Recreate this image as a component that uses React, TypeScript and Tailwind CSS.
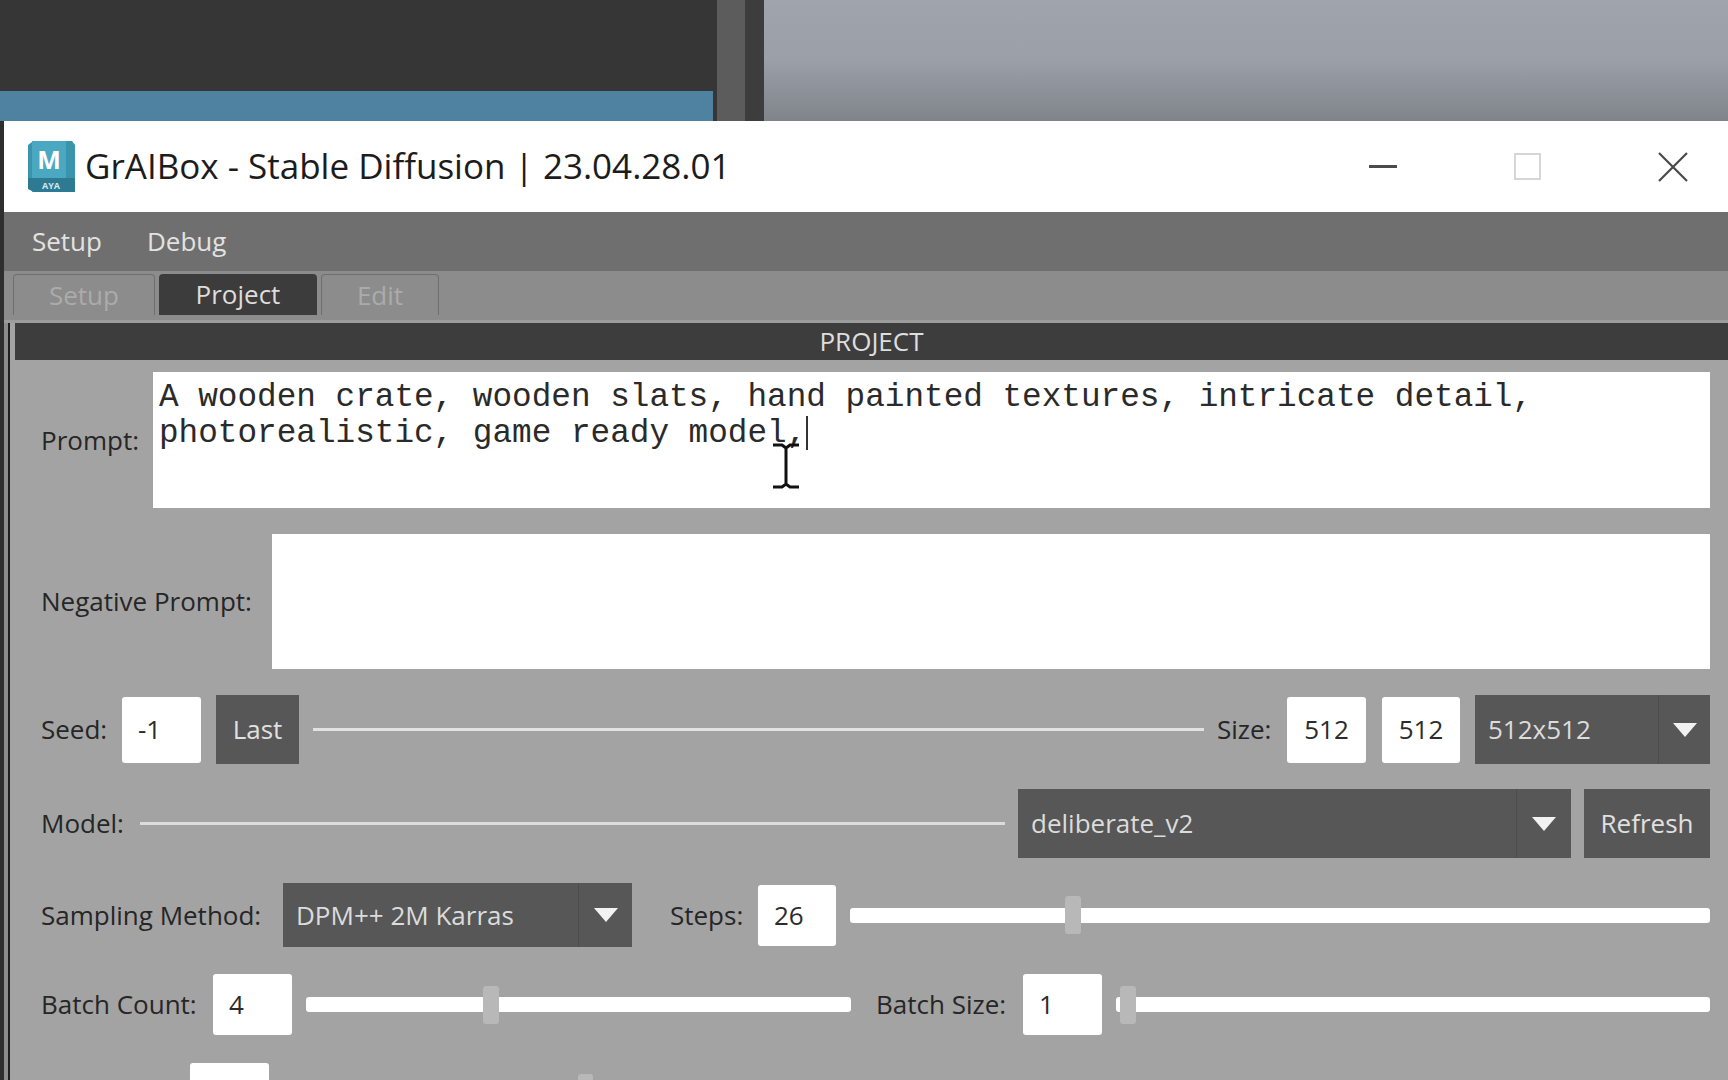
import React from 'react';

const sans = 'font-["Open_Sans","Noto_Sans",sans-serif]';

const ValueBox: React.FC<{ value: string; className: string }> = ({ value, className }) => (
  <div className={`flex items-center shrink-0 bg-white rounded-[3px] text-[26px] text-[#2c2c2c] ${className}`}>{value}</div>
);

const Combo: React.FC<{ value: string; className: string; arrowWidth: string }> = ({ value, className, arrowWidth }) => (
  <div className={`flex shrink-0 bg-[#575757] text-[26px] text-[#dcdcdc] ${className}`}>
    <div className="flex-1 flex items-center pl-[13px] whitespace-nowrap">{value}</div>
    <div className={`flex items-center justify-center border-l border-[#4d4d4d] ${arrowWidth}`}>
      <svg width="24" height="14" viewBox="0 0 24 14"><path d="M0 0h24L12 14z" fill="#f2f2f2" /></svg>
    </div>
  </div>
);

const Slider: React.FC<{ className: string; thumb: string }> = ({ className, thumb }) => (
  <div className={`relative h-[38px] flex items-center ${className}`}>
    <div className="w-full h-[15px] bg-white rounded-[3px]" />
    <div className={`absolute top-0 w-[16px] h-[38px] bg-[#b8b8b8] rounded-[3px] ${thumb}`} />
  </div>
);

const Label: React.FC<{ text: string; className: string }> = ({ text, className }) => (
  <div className={`shrink-0 text-[26px] text-[#262626] whitespace-nowrap ${className}`}>{text}</div>
);

export default function App() {
  return (
    <div className={`h-screen w-full overflow-hidden flex flex-col bg-[#333333] ${sans}`}>
      {/* stuff behind the window */}
      <div className="flex h-[121px] shrink-0">
        <div className="w-[717px] flex flex-col bg-[#363636]">
          <div className="h-[91px]" />
          <div className="h-[30px] w-[713px] bg-[#4f81a1]" />
        </div>
        <div className="w-[28px] bg-[#5c5c5c]" />
        <div className="w-[19px] bg-[#3d3d3d]" />
        <div className="flex-1 bg-gradient-to-b from-[#a0a4ac] via-[#9a9fa8] to-[#80848a]" />
      </div>

      <div className="flex flex-1 min-h-0">
        <div className="w-[4px] shrink-0 bg-[#2e2e2e]" />
        <div className="flex-1 flex flex-col min-w-0">
          {/* title bar */}
          <div className="h-[91px] shrink-0 bg-white flex items-center pl-[24px] pr-[40px]">
            <svg width="48" height="52" viewBox="0 0 48 52" className="shrink-0">
              <path d="M4 0h36l7 4v47H4z" fill="#4aa8c0" />
              <path d="M0 4l4-3v36H0z" fill="#3a94ad" />
              <path d="M38 0h6l3 4v34h-9z" fill="#3a94ad" />
              <path d="M4 37h43v14H6l-6-3V37z" fill="#2d7a92" />
              <text x="21" y="28" textAnchor="middle" fontSize="25" fontWeight="700" fill="#ffffff" fontFamily="Open Sans, sans-serif">M</text>
              <text x="23" y="48" textAnchor="middle" fontSize="9" fontWeight="700" fill="#cfe8ef" fontFamily="Open Sans, sans-serif">AYA</text>
            </svg>
            <div className="ml-[9px] text-[35px] text-[#1c1c1c] whitespace-nowrap">GrAIBox - Stable Diffusion | 23.04.28.01</div>
            <div className="flex-1" />
            <svg width="28" height="4" viewBox="0 0 28 4" className="shrink-0"><rect width="28" height="3" fill="#4b4b4b" /></svg>
            <div className="ml-[117px] w-[27px] h-[27px] border-2 border-[#d6d6d6] shrink-0" />
            <svg width="30" height="30" viewBox="0 0 30 30" className="ml-[117px] shrink-0">
              <path d="M1 1l28 28M29 1L1 29" stroke="#4a4a4a" strokeWidth="2.2" fill="none" />
            </svg>
          </div>

          {/* menu bar */}
          <div className="h-[59px] shrink-0 bg-[#6f6f6f] flex items-center pl-[28px] gap-[45px] text-[26px] text-[#e2e2e2]">
            <span>Setup</span>
            <span>Debug</span>
          </div>

          {/* tabs */}
          <div className="h-[52px] shrink-0 bg-[#8c8c8c] flex items-end pl-[9px] pb-[5px] gap-[4px] text-[26px] border-b-[3px] border-[#9c9c9c]">
            <div className="w-[142px] h-[41px] flex items-center justify-center rounded-t-[4px] border-x border-t border-[#6f6f6f] text-[#ababab]">Setup</div>
            <div className="w-[158px] h-[41px] flex items-center justify-center rounded-t-[4px] bg-[#3c3c3c] text-[#dddddd]">Project</div>
            <div className="w-[118px] h-[41px] flex items-center justify-center rounded-t-[4px] border-x border-t border-[#6f6f6f] text-[#ababab]">Edit</div>
          </div>

          <div className="flex-1 min-h-0 flex bg-[#a3a3a3]">
            <div className="w-[4px] shrink-0 bg-[#8c8c8c]" />
            <div className="w-[2px] shrink-0 bg-[#1f1f1f]" />
            <div className="w-[5px] shrink-0" />
            <div className="flex-1 min-w-0 flex flex-col">
              <div className="h-[37px] shrink-0 bg-[#3d3d3d] flex items-center justify-center text-[26px] text-[#dedede]">PROJECT</div>

              <div className="flex flex-col pl-[26px] pr-[18px]">
                {/* prompt */}
                <div className="flex items-center mt-[12px] h-[136px]">
                  <Label text="Prompt:" className="w-[112px]" />
                  <div className="relative flex-1 h-full bg-white pl-[6px] pt-[8px] font-['Liberation_Mono',monospace] text-[32.7px] leading-[36px] text-[#2a2a2a] whitespace-pre">
                    <div>A wooden crate, wooden slats, hand painted textures, intricate detail,</div>
                    <div className="flex items-start">
                      <span>photorealistic, game ready model,</span>
                      <span className="w-[2px] h-[34px] bg-[#333333]" />
                    </div>
                    {/* mouse cursor */}
                    <svg width="28" height="46" viewBox="0 0 28 46" className="absolute left-[619px] top-[71px]">
                      <path d="M1 2h9l4 3 4-3h9M14 5v36M1 44h9l4-3 4 3h9" stroke="#111111" strokeWidth="3" fill="none" />
                    </svg>
                  </div>
                </div>

                {/* negative prompt */}
                <div className="flex items-center mt-[26px] h-[135px]">
                  <Label text="Negative Prompt:" className="w-[231px]" />
                  <div className="flex-1 h-full bg-white" />
                </div>

                {/* seed + size */}
                <div className="flex items-center mt-[26px] h-[69px]">
                  <Label text="Seed:" className="w-[81px]" />
                  <ValueBox value="-1" className="w-[79px] h-[66px] pl-[16px]" />
                  <div className="ml-[15px] w-[83px] h-[69px] flex items-center justify-center shrink-0 bg-[#575757] text-[26px] text-[#e0e0e0]">Last</div>
                  <div className="ml-[14px] flex-1 h-[3px] bg-[#e2e2e2]" />
                  <Label text="Size:" className="ml-[13px] w-[70px]" />
                  <ValueBox value="512" className="w-[79px] h-[66px] justify-center" />
                  <ValueBox value="512" className="ml-[16px] w-[78px] h-[66px] justify-center" />
                  <Combo value="512x512" className="ml-[15px] w-[235px] h-[69px]" arrowWidth="w-[52px]" />
                </div>

                {/* model */}
                <div className="flex items-center mt-[25px] h-[69px]">
                  <Label text="Model:" className="w-[99px]" />
                  <div className="flex-1 h-[3px] bg-[#dcdcdc]" />
                  <Combo value="deliberate_v2" className="ml-[13px] w-[553px] h-[69px]" arrowWidth="w-[55px]" />
                  <div className="ml-[13px] w-[126px] h-[69px] flex items-center justify-center shrink-0 bg-[#575757] text-[26px] text-[#e0e0e0]">Refresh</div>
                </div>

                {/* sampling */}
                <div className="flex items-center mt-[25px] h-[64px]">
                  <Label text="Sampling Method:" className="w-[242px]" />
                  <Combo value="DPM++ 2M Karras" className="w-[349px] h-[64px]" arrowWidth="w-[54px]" />
                  <Label text="Steps:" className="ml-[38px] w-[88px]" />
                  <ValueBox value="26" className="w-[78px] h-[61px] pl-[16px]" />
                  <Slider className="ml-[14px] flex-1" thumb="left-[215px]" />
                </div>

                {/* batch */}
                <div className="flex items-center mt-[27px] h-[61px]">
                  <Label text="Batch Count:" className="w-[172px]" />
                  <ValueBox value="4" className="w-[79px] h-[61px] pl-[16px]" />
                  <Slider className="ml-[14px] w-[545px]" thumb="left-[177px]" />
                  <Label text="Batch Size:" className="ml-[25px] w-[147px]" />
                  <ValueBox value="1" className="w-[79px] h-[61px] pl-[16px]" />
                  <Slider className="ml-[14px] flex-1" thumb="left-[4px]" />
                </div>

                {/* next row, cut off by the bottom of the screen */}
                <div className="flex items-start mt-[28px] h-[61px] pl-[149px]">
                  <div className="w-[79px] h-[61px] shrink-0 bg-white rounded-[3px]" />
                  <div className="relative ml-[14px] flex-1 h-[61px]">
                    <div className="absolute left-[295px] top-[11px] w-[15px] h-[38px] bg-[#b8b8b8] rounded-[3px]" />
                  </div>
                </div>
              </div>
            </div>
          </div>
        </div>
      </div>
    </div>
  );
}
